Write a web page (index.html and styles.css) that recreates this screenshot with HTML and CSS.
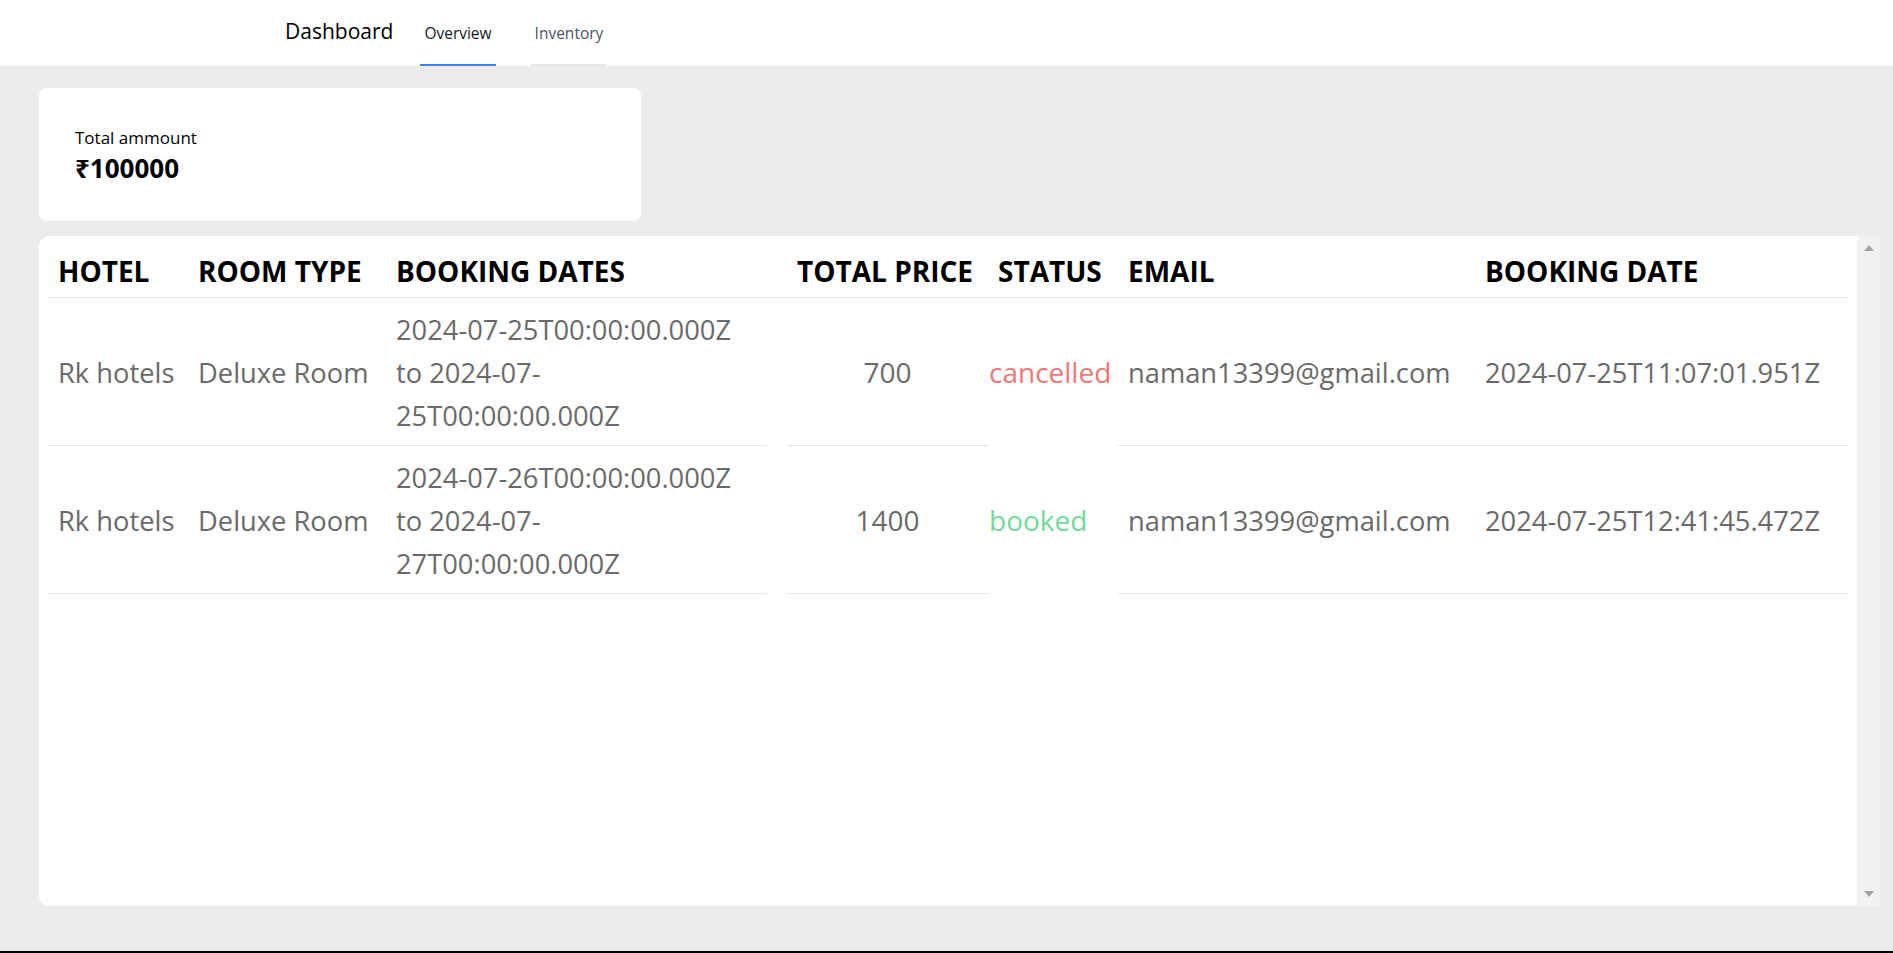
FILE: index.html
```html
<!DOCTYPE html>
<html lang="en">
<head>
<meta charset="utf-8">
<title>Dashboard</title>
<link rel="stylesheet" href="styles.css">
</head>
<body>
<header class="topbar">
  <h1 class="brand">Dashboard</h1>
  <nav class="tabs">
    <a class="tab tab-active">Overview</a>
    <a class="tab">Inventory</a>
  </nav>
</header>
<main class="content">
  <section class="stat-card">
    <p class="stat-label">Total ammount</p>
    <p class="stat-value">₹100000</p>
  </section>
  <section class="table-card">
    <div class="table-wrap">
      <table class="bookings">
        <colgroup>
          <col class="col-hotel"><col class="col-room"><col class="col-dates"><col class="col-price"><col class="col-status"><col class="col-email"><col class="col-created">
        </colgroup>
        <thead>
          <tr>
            <th>HOTEL</th><th>ROOM TYPE</th><th>BOOKING DATES</th><th>TOTAL PRICE</th><th>STATUS</th><th>EMAIL</th><th>BOOKING DATE</th>
          </tr>
        </thead>
        <tbody>
          <tr>
            <td class="nowrap">Rk hotels</td>
            <td class="nowrap">Deluxe Room</td>
            <td class="dates">2024-07-25T00:00:00.000Z<br>to 2024-07-<br>25T00:00:00.000Z</td>
            <td class="price">700</td>
            <td class="status status-cancelled">cancelled</td>
            <td class="nowrap">naman13399@gmail.com</td>
            <td class="nowrap">2024-07-25T11:07:01.951Z</td>
          </tr>
          <tr>
            <td class="nowrap">Rk hotels</td>
            <td class="nowrap">Deluxe Room</td>
            <td class="dates">2024-07-26T00:00:00.000Z<br>to 2024-07-<br>27T00:00:00.000Z</td>
            <td class="price">1400</td>
            <td class="status status-booked">booked</td>
            <td class="nowrap">naman13399@gmail.com</td>
            <td class="nowrap">2024-07-25T12:41:45.472Z</td>
          </tr>
        </tbody>
      </table>
    </div>
    <div class="scrollbar" aria-hidden="true">
      <span class="arrow arrow-up"></span>
      <span class="arrow arrow-down"></span>
    </div>
  </section>
</main>
<div class="window-edge"></div>
</body>
</html>
```
FILE: styles.css
```css
* { box-sizing: border-box; }

html, body { height: 100%; }

body {
  margin: 0;
  font-family: "Open Sans", "Noto Sans", sans-serif;
  background: #ececec;
  color: #000;
  display: flex;
  flex-direction: column;
}

/* ---------- top bar ---------- */
.topbar {
  height: 66px;
  background: #fff;
  display: flex;
  align-items: flex-start;
  padding-left: 285px;
  flex-shrink: 0;
}

.brand {
  margin: 0;
  font-size: 21px;
  font-weight: 400;
  line-height: 62px;
  color: #000;
}

.tabs {
  display: flex;
  gap: 35px;
  margin-left: 27px;
}

.tab {
  display: block;
  padding: 2px 4px 0;
  line-height: 62px;
  font-size: 15.5px;
  color: #4b5563;
  border-bottom: 2px solid #e5e7eb;
  cursor: pointer;
}

.tab-active {
  color: #111827;
  border-bottom-color: #3b82f6;
}

/* ---------- content ---------- */
.content {
  flex: 1;
  padding: 22px 13px 0 39px;
  display: flex;
  flex-direction: column;
  gap: 15px;
}

.stat-card {
  width: 602px;
  background: #fff;
  border-radius: 8px;
  padding: 38px 36px 35px;
}

.stat-card p { margin: 0; }

.stat-label {
  font-size: 17px;
  line-height: 24px;
}

.stat-value {
  font-size: 26px;
  font-weight: 700;
  line-height: 36px;
}

.table-card {
  height: 670px;
  display: flex;
}

.table-wrap {
  flex: 1;
  background: #fff;
  border-radius: 10px 0 0 10px;
  padding: 4px 9px 0;
}

.bookings {
  width: 1800px;
  table-layout: fixed;
  border-collapse: separate;
  border-spacing: 0;
  font-size: 27.3px;
  line-height: 43px;
}

.col-hotel { width: 140px; }
.col-room { width: 198px; }
.col-dates { width: 401px; }
.col-price { width: 201px; }
.col-status { width: 130px; }
.col-email { width: 357px; }
.col-created { width: 373px; }

.bookings th {
  text-align: left;
  font-size: 28px;
  font-weight: 700;
  color: #000;
  white-space: nowrap;
  padding: 10px 10px 4px;
  border-bottom: 1px solid #e6e6e6;
}

.bookings td {
  padding: 10px 10px 9px;
  color: #6a6a6a;
  vertical-align: middle;
  border-bottom: 1px solid #e6e6e6;
}

.bookings td.nowrap { white-space: nowrap; }

.bookings td.dates {
  padding-right: 30px;
  border-bottom: 0;
  background: linear-gradient(#e6e6e6, #e6e6e6) left bottom / calc(100% - 20px) 1px no-repeat;
}

.bookings td.price {
  text-align: center;
  font-size: 28px;
}

.bookings td.status {
  border-bottom: 0;
  padding-left: 1px;
  font-size: 28px;
  white-space: nowrap;
}

.bookings td.status-cancelled { color: #ef7777; }
.bookings td.status-booked { color: #72d99c; }

/* ---------- scrollbar track ---------- */
.scrollbar {
  width: 23px;
  background: #f1f1f1;
  display: flex;
  flex-direction: column;
  justify-content: space-between;
  align-items: center;
  padding: 9px 0;
}

.arrow {
  width: 0;
  height: 0;
  border-left: 5.5px solid transparent;
  border-right: 5.5px solid transparent;
}

.arrow-up { border-bottom: 6px solid #a3a3a3; }
.arrow-down { border-top: 6px solid #a3a3a3; }

.window-edge {
  height: 2px;
  background: #000;
  flex-shrink: 0;
}
```
